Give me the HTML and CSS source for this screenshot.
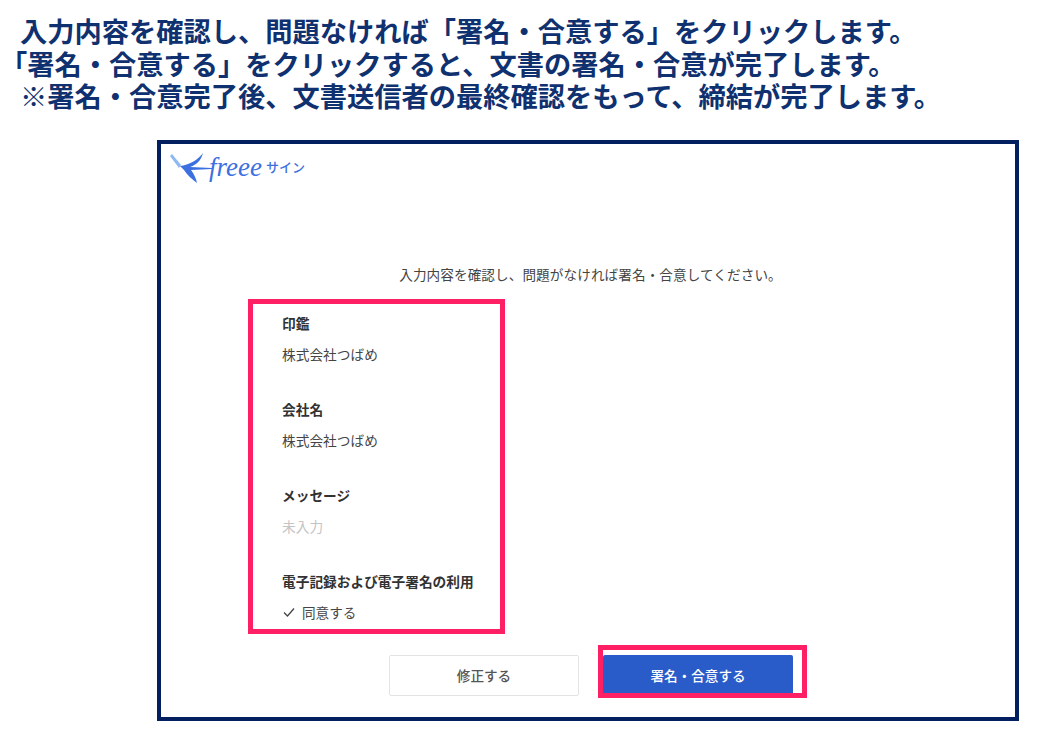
FILE: index.html
```html
<!DOCTYPE html>
<html lang="ja">
<head>
<meta charset="utf-8">
<title>署名・合意</title>
<link rel="stylesheet" href="styles.css">
</head>
<body>
<div class="lead">
  <p class="lead-line indent">入力内容を確認し、問題なければ「署名・合意する」をクリックします。</p>
  <p class="lead-line">「署名・合意する」をクリックすると、文書の署名・合意が完了します。</p>
  <p class="lead-line indent">※署名・合意完了後、文書送信者の最終確認をもって、締結が完了します。</p>
</div>
<main class="frame">
  <div class="logo">
    <svg class="bird" viewBox="168 150 44 36" width="44" height="36" aria-hidden="true">
      <path d="M170 156 L172 154 L181 165 L179 168 Z" fill="#8db9f0"/>
      <path d="M180 166 C189 165 198 160 203 153 C201 161 196 165 190 167 L212 168 L212 169 L191 170 C194 174 196 178 197 183 C192 179 187 175 184 170 Z" fill="#3c6fe0"/>
    </svg>
    <span class="logo-word">freee</span>
    <span class="logo-sub">サイン</span>
  </div>
  <p class="intro">入力内容を確認し、問題がなければ署名・合意してください。</p>
  <section class="summary">
    <div class="field">
      <h2 class="label">印鑑</h2>
      <p class="value">株式会社つばめ</p>
    </div>
    <div class="field">
      <h2 class="label">会社名</h2>
      <p class="value">株式会社つばめ</p>
    </div>
    <div class="field">
      <h2 class="label">メッセージ</h2>
      <p class="value empty">未入力</p>
    </div>
    <div class="field">
      <h2 class="label">電子記録および電子署名の利用</h2>
      <p class="value agree">
        <svg class="check" viewBox="0 0 14 14" width="14" height="14" aria-hidden="true"><path d="M2 7.5 L5.5 11 L12 3.5" fill="none" stroke="#444" stroke-width="1.3"/></svg>
        同意する
      </p>
    </div>
  </section>
  <div class="actions">
    <button class="btn btn-secondary" type="button">修正する</button>
    <div class="highlight">
      <button class="btn btn-primary" type="button">署名・合意する</button>
    </div>
  </div>
</main>
</body>
</html>
```

FILE: styles.css
```css
* { box-sizing: border-box; }
html, body { margin: 0; padding: 0; }
body {
  width: 1043px;
  height: 746px;
  overflow: hidden;
  background: #fff;
  font-family: "Noto Sans CJK JP", "Noto Sans", sans-serif;
  color: #323232;
}
.lead { padding-top: 14px; height: 140px; }
.lead-line {
  margin: 0;
  font-size: 27.25px;
  line-height: 32.7px;
  font-weight: 700;
  color: #0f3170;
  white-space: nowrap;
}
.indent { padding-left: 20px; }
.frame {
  margin-left: 157px;
  width: 862px;
  height: 581px;
  border: 4px solid #02205f;
  padding: 6px 0 0;
}
.logo { display: flex; align-items: center; height: 36px; padding-left: 7px; }
.bird { flex: none; margin-right: -3px; }
.logo-word {
  font-family: "Liberation Serif", serif;
  font-style: italic;
  font-size: 27px;
  line-height: 32px;
  color: #3c6fe0;
  margin-bottom: 3px;
}
.logo-sub { font-size: 13px; font-weight: 500; color: #3c6fe0; margin: 0 0 3px 4px; }
.intro {
  margin: 76px 0 0;
  padding-left: 5px;
  text-align: center;
  font-size: 13.6px;
  letter-spacing: 0.1px;
  line-height: 24px;
  color: #444;
}
.summary {
  margin: 13px 0 0 87px;
  width: 257px;
  height: 335px;
  border: 5px solid #ff1f64;
  padding: 8px 0 0 29px;
}
.field { height: 86px; }
.label {
  margin: 0;
  font-size: 13.7px;
  line-height: 22px;
  font-weight: 700;
  color: #323232;
}
.value {
  margin: 9px 0 0;
  font-size: 13.7px;
  line-height: 22px;
  color: #444;
}
.empty { color: #c4c4c4; }
.agree { display: flex; align-items: center; gap: 6px; font-size: 13.6px; }
.check { flex: none; }
.actions { display: flex; margin: 11px 0 0 228px; align-items: flex-start; }
.btn {
  width: 190px;
  height: 41px;
  font: 500 13.6px/1 "Noto Sans CJK JP", sans-serif;
  border-radius: 2px;
  padding: 0;
}
.btn-secondary { margin-top: 10px; background: #fff; color: #555; border: 1px solid #e4e4e4; }
.highlight {
  margin-left: 19px;
  width: 209px;
  height: 53px;
  border: 5px solid #ff1f64;
  padding-top: 5px;
  overflow: hidden;
}
.btn-primary { background: #2a5cc9; color: #fff; border: 0; display: block; }
```
